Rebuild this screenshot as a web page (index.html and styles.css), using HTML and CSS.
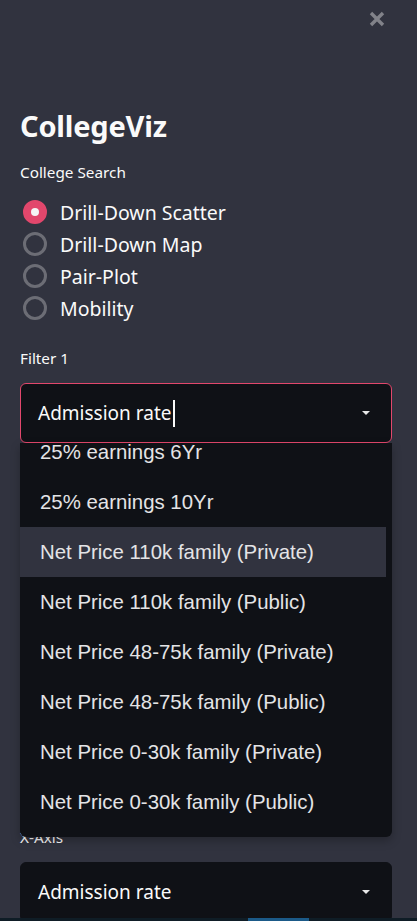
FILE: index.html
```html
<!DOCTYPE html>
<html lang="en">
<head>
<meta charset="utf-8">
<title>CollegeViz</title>
<link rel="stylesheet" href="styles.css">
</head>
<body>
<aside class="sidebar">
  <div class="header">
    <button class="close" aria-label="Close sidebar">
      <svg viewBox="0 0 18 18" width="18" height="18"><path d="M3 3 L15 15 M15 3 L3 15" stroke="currentColor" stroke-width="3.4" stroke-linecap="butt"/></svg>
    </button>
  </div>
  <h1 class="title">CollegeViz</h1>
  <div class="label">College Search</div>
  <div class="radios">
    <label class="radio checked"><span class="dot"></span><span class="radio-text">Drill-Down Scatter</span></label>
    <label class="radio"><span class="dot"></span><span class="radio-text">Drill-Down Map</span></label>
    <label class="radio"><span class="dot"></span><span class="radio-text">Pair-Plot</span></label>
    <label class="radio"><span class="dot"></span><span class="radio-text">Mobility</span></label>
  </div>
  <div class="label label-filter">Filter 1</div>
  <div class="select-wrap">
    <div class="select focused">
      <span class="value">Admission rate</span><span class="caret"></span>
      <span class="arrow"></span>
    </div>
    <ul class="menu">
      <li class="menu-inner">
        <ul class="options">
          <li class="option">25% earnings 6Yr</li>
          <li class="option">25% earnings 10Yr</li>
          <li class="option hover">Net Price 110k family (Private)</li>
          <li class="option">Net Price 110k family (Public)</li>
          <li class="option">Net Price 48-75k family (Private)</li>
          <li class="option">Net Price 48-75k family (Public)</li>
          <li class="option">Net Price 0-30k family (Private)</li>
          <li class="option">Net Price 0-30k family (Public)</li>
        </ul>
      </li>
    </ul>
  </div>
  <div class="hidden-space"></div>
  <div class="label">X-Axis</div>
  <div class="select">
    <span class="value">Admission rate</span>
    <span class="arrow"></span>
  </div>
</aside>
<div class="bottom-strip"><span class="strip-seg"></span></div>
</body>
</html>
```

FILE: styles.css
```css
* { box-sizing: border-box; }
html, body {
  margin: 0;
  padding: 0;
  width: 417px;
  height: 921px;
  overflow: hidden;
  background: #31333f;
}
body {
  font-family: "Noto Sans", "Open Sans", sans-serif;
  color: #fafafa;
}
.sidebar {
  width: 417px;
  height: 921px;
  padding: 0 25px 0 20px;
  display: flex;
  flex-direction: column;
  background: #31333f;
}
.sidebar > * { flex: none; }
.header {
  height: 109px;
  display: flex;
  justify-content: flex-end;
  align-items: flex-start;
  padding-top: 10px;
  margin-right: 6px;
}
.close {
  width: 18px;
  height: 18px;
  padding: 0;
  border: 0;
  background: transparent;
  color: #818289;
  display: flex;
}
.title {
  margin: 0;
  font-size: 29px;
  line-height: 34px;
  font-weight: 700;
  letter-spacing: -0.2px;
}
.label {
  font-size: 15.3px;
  line-height: 20px;
  margin-top: 19px;
}
.radios {
  display: flex;
  flex-direction: column;
  margin-top: 14px;
}
.radio {
  height: 32px;
  display: flex;
  align-items: center;
  gap: 13px;
  padding-left: 3px;
  font-size: 19.5px;
}
.dot {
  width: 24px;
  height: 24px;
  border-radius: 50%;
  border: 3px solid #6c6d75;
  flex: none;
  display: flex;
  align-items: center;
  justify-content: center;
}
.radio.checked .dot {
  border-color: #e2476c;
  background: #e2476c;
}
.radio.checked .dot::after {
  content: "";
  width: 8px;
  height: 8px;
  border-radius: 50%;
  background: #f5f5f5;
}
.label-filter {
  margin-top: 24px;
}
.select-wrap {
  position: relative;
  margin-top: 15px;
}
.select {
  height: 60px;
  border: 1px solid #0f1116;
  border-radius: 6px;
  background: #0f1116;
  display: flex;
  align-items: center;
  padding-left: 17px;
  padding-right: 21px;
  font-size: 19px;
}
.label + .select { margin-top: 15px; }
.select.focused {
  border-color: #e2476c;
}
.value { white-space: nowrap; }
.caret {
  width: 2px;
  height: 27px;
  background: #fafafa;
  margin-left: 2px;
}
.arrow {
  margin-left: auto;
  width: 0;
  height: 0;
  border-left: 4.5px solid transparent;
  border-right: 4.5px solid transparent;
  border-top: 4.5px solid #e8e8e8;
}
.menu {
  position: absolute;
  left: 0;
  right: 0;
  top: 60px;
  height: 394px;
  margin: 0;
  padding: 0;
  list-style: none;
  background: #0f1116;
  border-radius: 0 0 6px 6px;
  overflow: hidden;
  box-shadow: 0 4px 10px rgba(0,0,0,0.25);
  z-index: 2;
}
.menu-inner {
  list-style: none;
  margin-top: -16px;
  padding-right: 6px;
}
.options {
  margin: 0;
  padding: 0;
  list-style: none;
}
.option {
  height: 50px;
  display: flex;
  align-items: center;
  padding-left: 20px;
  font-family: "Liberation Sans", Arial, sans-serif;
  font-size: 20.4px;
  color: #e4e4e6;
  white-space: nowrap;
}
.option.hover {
  background: #31333f;
}
.hidden-space {
  height: 365px;
}
.bottom-strip {
  position: fixed;
  left: 0;
  right: 0;
  bottom: 0;
  height: 3px;
  background: #0f1d26;
  z-index: 3;
}
.strip-seg {
  position: absolute;
  left: 248px;
  width: 61px;
  top: 0;
  bottom: 0;
  background: #1b5a88;
}
```
